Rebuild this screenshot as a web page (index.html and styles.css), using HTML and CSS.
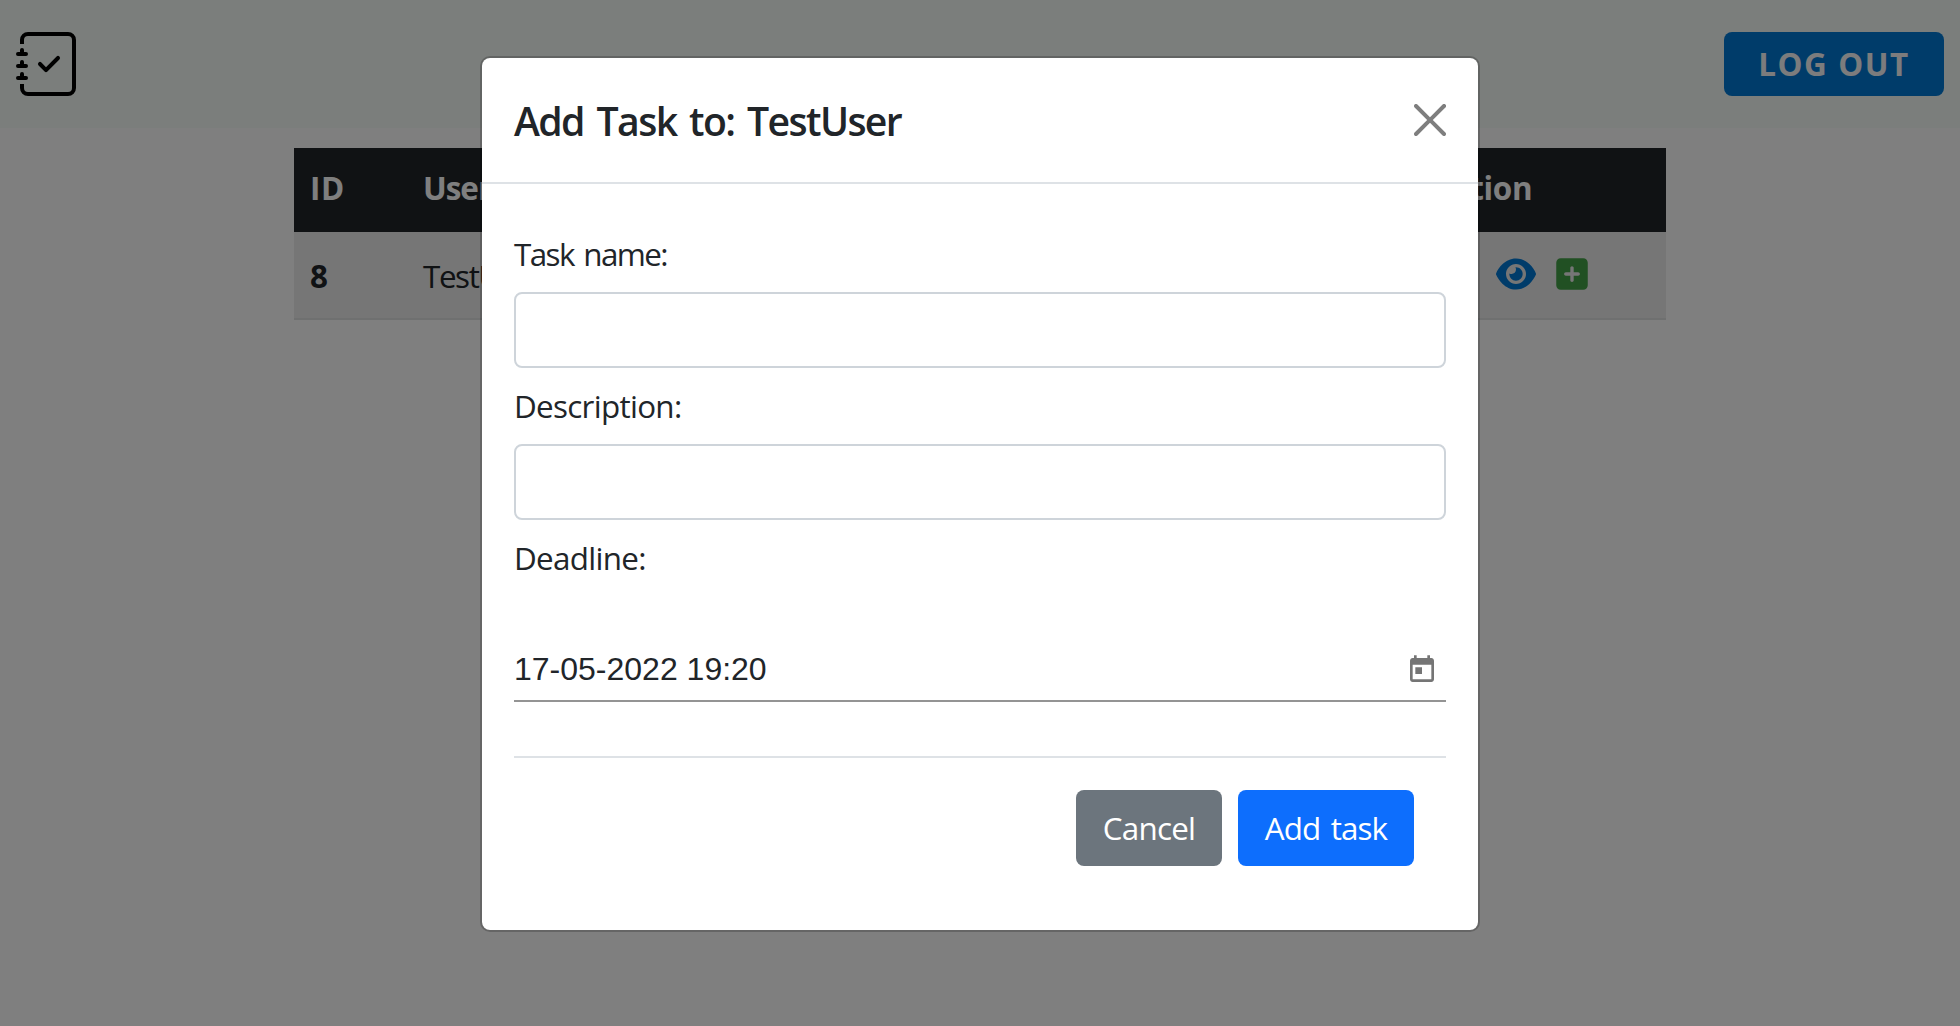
FILE: index.html
```html
<!DOCTYPE html>
<html lang="en">
<head>
<meta charset="utf-8">
<title>Tasks</title>
<link rel="stylesheet" href="styles.css">
</head>
<body>
<header class="navbar">
  <svg class="logo" viewBox="0 0 16 16" fill="currentColor"><path fill-rule="evenodd" d="M10.854 6.146a.5.5 0 0 1 0 .708l-3 3a.5.5 0 0 1-.708 0l-1.5-1.5a.5.5 0 1 1 .708-.708L7.5 8.793l2.646-2.647a.5.5 0 0 1 .708 0z"/><path d="M3 0h10a2 2 0 0 1 2 2v12a2 2 0 0 1-2 2H3a2 2 0 0 1-2-2v-1h1v1a1 1 0 0 0 1 1h10a1 1 0 0 0 1-1V2a1 1 0 0 0-1-1H3a1 1 0 0 0-1 1v1H1V2a2 2 0 0 1 2-2z"/><path d="M1 5v-.5a.5.5 0 0 1 1 0V5h.5a.5.5 0 0 1 0 1h-2a.5.5 0 0 1 0-1H1zm0 3v-.5a.5.5 0 0 1 1 0V8h.5a.5.5 0 0 1 0 1h-2a.5.5 0 0 1 0-1H1zm0 3v-.5a.5.5 0 0 1 1 0v.5h.5a.5.5 0 0 1 0 1h-2a.5.5 0 0 1 0-1H1z"/></svg>
  <button class="logout" type="button">LOG OUT</button>
</header>
<main>
  <table class="users">
    <thead><tr><th class="col-id">ID</th><th class="col-name">Username</th><th class="col-action">Action</th></tr></thead>
    <tbody><tr>
      <th>8</th>
      <td class="user">TestUser</td>
      <td><div class="actions">
        <svg class="eye" viewBox="0 0 576 512" fill="currentColor"><path d="M279.6 160.4C282.4 160.1 285.2 160 288 160C341 160 384 202.1 384 256C384 309 341 352 288 352C234.1 352 192 309 192 256C192 253.2 192.1 250.4 192.4 247.6C201.7 252.1 212.5 256 224 256C259.3 256 288 227.3 288 192C288 180.5 284.1 169.7 279.6 160.4zM480.6 112.6C527.4 156 558.7 207.1 573.5 243.7C576.8 251.6 576.8 260.4 573.5 268.3C558.7 304 527.4 355.1 480.6 399.4C433.5 443.2 368.8 480 288 480C207.2 480 142.5 443.2 95.42 399.4C48.62 355.1 17.34 304 2.461 268.3C-.8205 260.4-.8205 251.6 2.461 243.7C17.34 207.1 48.62 156 95.42 112.6C142.5 68.84 207.2 32 288 32C368.8 32 433.5 68.84 480.6 112.6V112.6zM288 112C208.5 112 144 176.5 144 256C144 335.5 208.5 400 288 400C367.5 400 432 335.5 432 256C432 176.5 367.5 112 288 112z"/></svg>
        <svg class="plus" viewBox="0 0 448 512" fill="currentColor"><path d="M384 32C419.3 32 448 60.65 448 96V416C448 451.3 419.3 480 384 480H64C28.65 480 0 451.3 0 416V96C0 60.65 28.65 32 64 32H384zM224 368C237.3 368 248 357.3 248 344V280H312C325.3 280 336 269.3 336 256C336 242.7 325.3 232 312 232H248V168C248 154.7 237.3 144 224 144C210.7 144 200 154.7 200 168V232H136C122.7 232 112 242.7 112 256C112 269.3 122.7 280 136 280H200V344C200 357.3 210.7 368 224 368z"/></svg>
      </div></td>
    </tr></tbody>
  </table>
</main>
<div class="backdrop">
  <section class="modal" role="dialog" aria-labelledby="title">
    <div class="modal-header">
      <h5 id="title">Add Task to: TestUser</h5>
      <svg class="close" viewBox="0 0 16 16"><path d="M.293.293a1 1 0 011.414 0L8 6.586 14.293.293a1 1 0 111.414 1.414L9.414 8l6.293 6.293a1 1 0 01-1.414 1.414L8 9.414l-6.293 6.293a1 1 0 01-1.414-1.414L6.586 8 .293 1.707a1 1 0 010-1.414z"/></svg>
    </div>
    <form class="modal-body">
      <label class="l-name" for="name">Task name:</label>
      <input id="name" type="text">
      <label class="l-desc" for="desc">Description:</label>
      <input id="desc" type="text">
      <label class="l-dead">Deadline:</label>
      <div class="date">
        <span>17-05-2022 19:20</span>
        <svg viewBox="0 0 24 24" fill="currentColor"><path d="M19 3h-1V1h-2v2H8V1H6v2H5c-1.11 0-1.99.9-1.99 2L3 19c0 1.1.89 2 2 2h14c1.1 0 2-.9 2-2V5c0-1.1-.9-2-2-2zm0 16H5V8h14v11zM7 10h5v5H7z"/></svg>
      </div>
      <div class="modal-footer">
        <button class="btn cancel" type="button">Cancel</button>
        <button class="btn add" type="button">Add task</button>
      </div>
    </form>
  </section>
</div>
</body>
</html>
```
FILE: styles.css
```css
* { box-sizing: border-box; }
body {
  margin: 0;
  height: 1026px;
  overflow: hidden;
  background: #fff;
  color: #212529;
  font: 31.4px/48px "Open Sans", "Noto Sans", sans-serif;
  letter-spacing: -0.3px;
}
svg { display: block; flex: none; }
button { border: 0; font: inherit; color: #fff; white-space: nowrap; padding: 0; }
.navbar {
  display: flex;
  justify-content: space-between;
  align-items: center;
  height: 128px;
  padding: 0 16px;
  background: #f6fcf9;
}
.logo { width: 64px; height: 64px; color: #000; }
.logout {
  width: 220px;
  height: 64px;
  border-radius: 8px;
  background: #0078d4;
  color: #f8f9fa;
  font-weight: 700;
  letter-spacing: 1.6px;
}
.users {
  width: 1372px;
  margin: 20px auto 0;
  border-collapse: separate;
  border-spacing: 0;
  table-layout: fixed;
}
.users th, .users td { padding: 0 16px; text-align: left; white-space: nowrap; }
.users thead th { height: 84px; padding-bottom: 5px; background: #212529; color: #fff; }
.users tbody th, .users tbody td {
  height: 88px;
  padding-top: 2px;
  background: #ececec;
  border-bottom: 2px solid #dfe0e1;
}
.users .col-id { width: 113px; letter-spacing: 0.7px; }
.users .col-name { letter-spacing: -1px; }
.users .col-action { width: 252px; padding-left: 19px; }
.users .user { letter-spacing: -1.4px; }
.actions { display: flex; gap: 20px; padding-left: 66px; margin-top: -5px; }
.eye { width: 40px; height: 36px; color: #0078d4; }
.plus { width: 32px; height: 36px; color: #43a047; }
.backdrop {
  position: absolute;
  inset: 0;
  padding-top: 56px;
  background: rgba(0, 0, 0, .5);
}
.modal {
  width: 1000px;
  height: 876px;
  margin: 0 auto;
  background: #fff;
  background-clip: padding-box;
  border: 2px solid rgba(0, 0, 0, .2);
  border-radius: 10px;
}
.modal-header {
  display: flex;
  justify-content: space-between;
  height: 126px;
  padding: 32px;
  border-bottom: 2px solid #dee2e6;
}
h5 {
  margin: 1px 0 0;
  font-size: 39.2px;
  line-height: 60px;
  font-weight: 600;
  white-space: nowrap;
  letter-spacing: -1.6px;
  word-spacing: 4px;
}
.close { width: 32px; height: 32px; margin-top: 14px; opacity: .5; }
.modal-body { display: flex; flex-direction: column; padding: 32px; }
.modal-body label { height: 48px; margin-top: 14px; }
.l-name { letter-spacing: -1.6px; word-spacing: 3px; }
.l-desc { letter-spacing: -0.7px; }
.l-dead { letter-spacing: -0.7px; }
.modal-body input {
  height: 76px;
  width: 100%;
  margin-top: 14px;
  padding: 12px 24px;
  border: 2px solid #ced4da;
  border-radius: 8px;
  font: inherit;
}
.date {
  display: flex;
  justify-content: space-between;
  height: 66px;
  margin-top: 54px;
  padding: 9px 8px 0 0;
  border-bottom: 2px solid #949494;
  font-family: "Liberation Sans", Arial, sans-serif;
  font-size: 32px;
  letter-spacing: 0;
}
.date svg { width: 32px; height: 32px; margin-top: 9px; color: #757575; }
.modal-footer {
  display: flex;
  justify-content: flex-end;
  gap: 16px;
  margin-top: 54px;
  padding: 32px 32px 0;
  border-top: 2px solid #dee2e6;
}
.btn { height: 76px; border-radius: 8px; }
.cancel { width: 146px; background: #6c757d; letter-spacing: -0.8px; }
.add { width: 176px; background: #0d6efd; letter-spacing: -0.9px; word-spacing: 3px; }
```
